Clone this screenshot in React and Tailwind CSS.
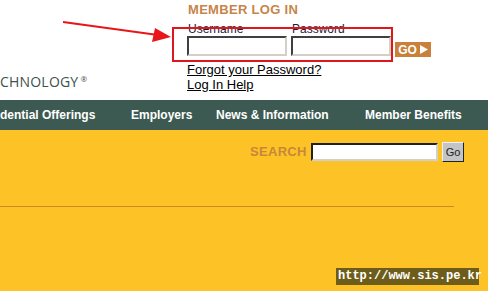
import React from 'react';

const font = { fontFamily: '"Liberation Sans", Arial, sans-serif' };

const navItems = [
  { label: 'dential Offerings', w: 'w-[131px]' },
  { label: 'Employers', w: 'w-[85px]' },
  { label: 'News & Information', w: 'w-[149px]' },
  { label: 'Member Benefits', w: 'w-[110px]' },
];

const inputCls =
  'h-[20px] w-[100px] bg-white border-2 border-t-[#404040] border-l-[#404040] border-b-[#d4d0c8] border-r-[#d4d0c8] outline-none';

export default function App() {
  return (
    <div className="relative w-[488px] h-[291px] overflow-hidden bg-[#fdc326]" style={font}>
      {/* header */}
      <div className="relative flex h-[100px] bg-white">
        <div className="w-[187px] pt-[70px]">
          <span className="text-[14px] tracking-[0.2px] text-[#3f514c]" style={{ fontFamily: '"Open Sans", sans-serif' }}>
            CHNOLOGY<span className="relative top-[-5px] ml-[2px] text-[8px]">®</span>
          </span>
        </div>
        <div className="flex flex-col pt-[2px]">
          <div className="text-[13px] font-bold leading-[15px] tracking-[0.3px] text-[#c6854a] pl-[1px]">MEMBER LOG IN</div>
          <div className="flex items-end mt-[5px]">
            <div className="flex flex-col">
              <span className="text-[12px] leading-[14px] text-[#1c1c3a] pl-[1px]">Username</span>
              <input className={inputCls} />
            </div>
            <div className="flex flex-col ml-[4px]">
              <span className="text-[12px] leading-[14px] text-[#1c1c3a] pl-[1px]">Password</span>
              <input type="password" className={inputCls} />
            </div>
            <div className="ml-[4px] mb-[-1px] flex h-[15px] w-[36px] items-center justify-center gap-[3px] bg-[#c8803a] text-[12px] font-bold text-white">
              GO
              <svg width="8" height="9" viewBox="0 0 8 9"><path d="M0 0 L8 4.5 L0 9 Z" fill="#fff" /></svg>
            </div>
          </div>
          <a className="mt-[6px] text-[13px] leading-[15px] text-black underline">Forgot your Password?</a>
          <a className="text-[13px] leading-[15px] text-black underline">Log In Help</a>
        </div>
        {/* annotation */}
        <svg className="absolute left-0 top-0" width="180" height="50">
          <line x1="63" y1="22" x2="158" y2="35" stroke="#e8161b" strokeWidth="2" />
          <path d="M171 37 L152 42 L155 28 Z" fill="#e8161b" />
        </svg>
        <div className="absolute left-[172px] top-[27px] h-[35px] w-[221px] border-2 border-[#e0161d]" />
      </div>

      {/* nav */}
      <div className="flex h-[30px] items-center bg-[#3d5a52] text-[12px] font-bold text-white">
        {navItems.map((n) => (
          <div key={n.label} className={`${n.w} shrink-0 whitespace-nowrap`}>{n.label}</div>
        ))}
      </div>

      {/* yellow body */}
      <div className="flex items-center pl-[250px] pt-[12px]">
        <span className="w-[57px] text-[13px] font-bold tracking-[0.3px] text-[#c8873a]">SEARCH</span>
        <input className="ml-[4px] h-[18px] w-[127px] bg-white border-2 border-t-[#202020] border-l-[#202020] border-b-[#d4d0c8] border-r-[#d4d0c8] outline-none" />
        <button className="ml-[4px] h-[20px] w-[22px] bg-[#c4c4c4] border border-t-[#f0f0f0] border-l-[#f0f0f0] border-b-[#222] border-r-[#222] text-[11px] text-[#222] leading-none">
          Go
        </button>
      </div>
      <div className="mt-[44px] h-[1px] w-[454px] bg-[#d0862a]" />

      <div className="absolute left-[336px] top-[268px] h-[17px] w-[143px] bg-[#6e5d1a] px-[2px] text-[12px] font-bold leading-[17px] text-white" style={{ fontFamily: '"Liberation Mono", monospace' }}>
        http://www.sis.pe.kr
      </div>
    </div>
  );
}
